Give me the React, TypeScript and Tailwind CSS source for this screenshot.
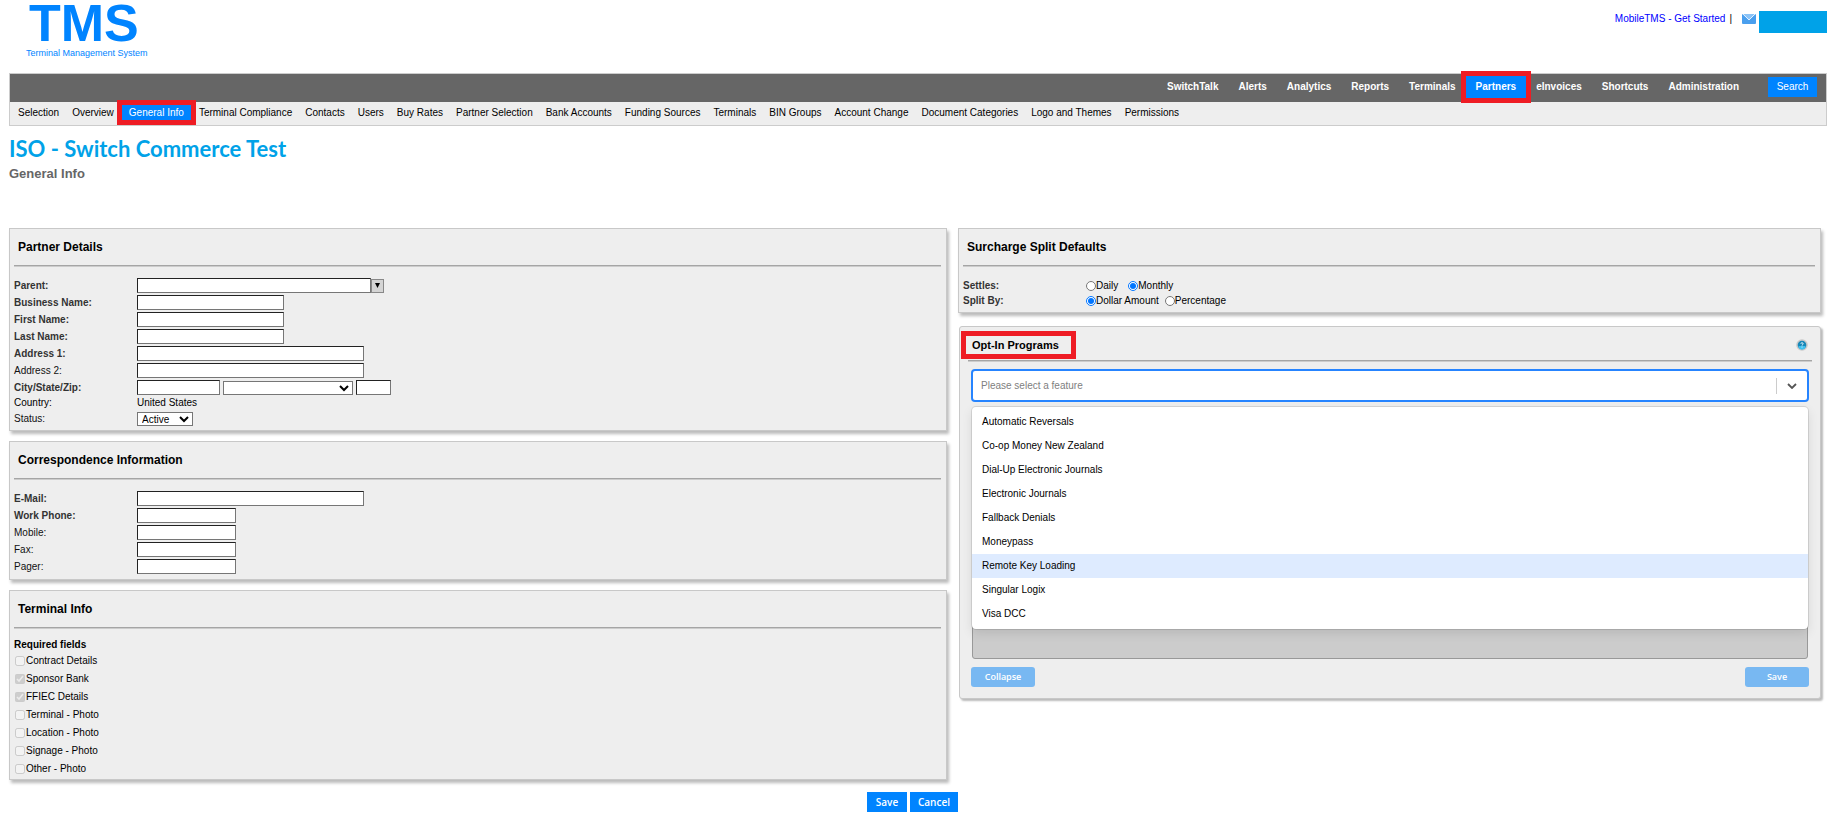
import { useState, type ReactNode } from "react";

const MAIN_NAV = [
  "SwitchTalk",
  "Alerts",
  "Analytics",
  "Reports",
  "Terminals",
  "Partners",
  "eInvoices",
  "Shortcuts",
  "Administration",
];

const SUB_NAV = [
  "Selection",
  "Overview",
  "General Info",
  "Terminal Compliance",
  "Contacts",
  "Users",
  "Buy Rates",
  "Partner Selection",
  "Bank Accounts",
  "Funding Sources",
  "Terminals",
  "BIN Groups",
  "Account Change",
  "Document Categories",
  "Logo and Themes",
  "Permissions",
];

const REQUIRED_FIELDS = [
  { label: "Contract Details", checked: false },
  { label: "Sponsor Bank", checked: true },
  { label: "FFIEC Details", checked: true },
  { label: "Terminal - Photo", checked: false },
  { label: "Location - Photo", checked: false },
  { label: "Signage - Photo", checked: false },
  { label: "Other - Photo", checked: false },
];

const FEATURES = [
  "Automatic Reversals",
  "Co-op Money New Zealand",
  "Dial-Up Electronic Journals",
  "Electronic Journals",
  "Fallback Denials",
  "Moneypass",
  "Remote Key Loading",
  "Singular Logix",
  "Visa DCC",
];

const inputClass =
  "block h-[15px] border border-t-[#222] border-l-[#222] border-r-[#767676] border-b-[#767676] bg-white px-px text-[10px] outline-none";

const Rule = () => <div className="h-[2px] border-t border-[#a5a5a5] bg-[#ccc]" />;

const Panel = ({ title, children }: { title: string; children: ReactNode }) => (
  <section className="border border-[#c8c8c8] bg-[#eee] pr-[5px] pl-1 shadow-[2px_3px_3px_#bbb]">
    <h2 className="flex h-9 items-center px-1 text-[12px] font-bold">{title}</h2>
    <Rule />
    {children}
  </section>
);

const Row = ({
  label,
  id,
  bold,
  children,
}: {
  label: string;
  id?: string;
  bold?: boolean;
  children: ReactNode;
}) => (
  <div className="flex h-[17px] items-center">
    <label
      htmlFor={id}
      className={bold ? "w-[123px] font-bold text-[#333]" : "w-[123px] text-[#111]"}
    >
      {label}
    </label>
    {children}
  </div>
);

const Radio = ({
  name,
  label,
  defaultChecked,
}: {
  name: string;
  label: string;
  defaultChecked?: boolean;
}) => (
  <label className="flex items-center">
    <input type="radio" name={name} defaultChecked={defaultChecked} className="size-[10px]" />
    {label}
  </label>
);

const Header = () => (
  <header className="flex h-[73px] items-start justify-between pl-[17px]">
    <div className="text-[#0084ff]">
      <div className="pl-[3px] text-[52px] leading-[46px] font-bold">TMS</div>
      <div className="text-[9px] leading-[14px]">Terminal Management System</div>
    </div>
    <div className="flex items-start pt-[11px]">
      <div className="flex h-[18px] items-center pb-[2px]">
        <a href="#" className="text-[#0000ff]">
          MobileTMS - Get Started
        </a>
        <span className="mx-1">|</span>
        <svg viewBox="0 0 14 10" className="ml-[6px] h-[10px] w-[14px]">
          <rect width="14" height="10" rx="1" fill="#4a9fee" />
          <path d="M0 0h14L7 6z" fill="#8cc4f7" />
          <path d="M1 0l6 6 6-6" fill="none" stroke="#e3f1ff" strokeWidth="1" />
        </svg>
      </div>
      <div className="ml-[3px] h-[22px] w-[68px] bg-[#00a2e8]" />
    </div>
  </header>
);

const Navigation = () => (
  <div className="border border-[#ccc]">
    <nav className="flex h-7 items-center justify-end bg-[#666] pr-[9px] pb-[2px] font-bold text-white">
      {MAIN_NAV.map((item) => (
        <a
          key={item}
          href="#"
          className={
            item === "Partners"
              ? "flex h-[22px] items-center bg-[#0084ff] px-[10px] outline-5 outline-[#ee1c24]"
              : "px-[10px]"
          }
        >
          {item}
        </a>
      ))}
      <button className="ml-[19px] h-5 w-[49px] bg-[#0084ff] font-normal">Search</button>
    </nav>
    <nav className="flex h-[23px] items-center gap-[3px] bg-[#eee] px-[3px] pb-[2px]">
      {SUB_NAV.map((item) => (
        <a
          key={item}
          href="#"
          className={
            item === "General Info"
              ? "flex h-[15px] items-center bg-[#0084ff] px-[7px] text-white outline-5 outline-[#ee1c24]"
              : "px-[5px]"
          }
        >
          {item}
        </a>
      ))}
    </nav>
  </div>
);

const PartnerDetails = () => (
  <Panel title="Partner Details">
    <div className="pt-[10px] pb-[3px]">
      <Row label="Parent:" id="parent" bold>
        <input id="parent" className={`${inputClass} w-[234px]`} />
        <button
          aria-label="Choose parent"
          className="flex h-[14px] w-[13px] items-center justify-center border border-[#888] bg-[#d4d4d4]"
        >
          <svg viewBox="0 0 6 6" className="size-[5px]">
            <path d="M0 0h6L3 6z" />
          </svg>
        </button>
      </Row>
      <Row label="Business Name:" id="business" bold>
        <input id="business" className={`${inputClass} w-[147px]`} />
      </Row>
      <Row label="First Name:" id="first" bold>
        <input id="first" className={`${inputClass} w-[147px]`} />
      </Row>
      <Row label="Last Name:" id="last" bold>
        <input id="last" className={`${inputClass} w-[147px]`} />
      </Row>
      <Row label="Address 1:" id="address1" bold>
        <input id="address1" className={`${inputClass} w-[227px]`} />
      </Row>
      <Row label="Address 2:" id="address2">
        <input id="address2" className={`${inputClass} w-[227px]`} />
      </Row>
      <Row label="City/State/Zip:" id="city" bold>
        <input id="city" className={`${inputClass} w-[83px]`} />
        <select
          aria-label="State"
          className="mx-[3px] h-[14px] w-[130px] border border-[#767676] bg-white text-[10px]"
        >
          <option></option>
        </select>
        <input aria-label="Zip" className={`${inputClass} w-[35px]`} />
      </Row>
      <div className="flex h-[14px] items-center">
        <span className="w-[123px]">Country:</span>
        <span>United States</span>
      </div>
      <Row label="Status:" id="status">
        <select
          id="status"
          className="h-[14px] w-[56px] border border-[#767676] bg-white text-[10px]"
        >
          <option>Active</option>
        </select>
      </Row>
    </div>
  </Panel>
);

const Correspondence = () => (
  <Panel title="Correspondence Information">
    <div className="pt-[10px] pb-1">
      <Row label="E-Mail:" id="email" bold>
        <input id="email" type="email" className={`${inputClass} w-[227px]`} />
      </Row>
      <Row label="Work Phone:" id="work" bold>
        <input id="work" className={`${inputClass} w-[99px]`} />
      </Row>
      <Row label="Mobile:" id="mobile">
        <input id="mobile" className={`${inputClass} w-[99px]`} />
      </Row>
      <Row label="Fax:" id="fax">
        <input id="fax" className={`${inputClass} w-[99px]`} />
      </Row>
      <Row label="Pager:" id="pager">
        <input id="pager" className={`${inputClass} w-[99px]`} />
      </Row>
    </div>
  </Panel>
);

const TerminalInfo = () => (
  <Panel title="Terminal Info">
    <div className="pt-[9px] pb-px">
      <h3 className="flex h-[14px] items-center font-bold">Required fields</h3>
      {REQUIRED_FIELDS.map((field) => (
        <label key={field.label} className="flex h-[18px] items-center pl-px">
          <input
            type="checkbox"
            disabled
            defaultChecked={field.checked}
            className="mr-px size-[10px]"
          />
          {field.label}
        </label>
      ))}
    </div>
  </Panel>
);

const SurchargeSplit = () => (
  <Panel title="Surcharge Split Defaults">
    <div className="flex flex-col pt-[11px] pb-1">
      <div className="flex h-[15px] items-center">
        <span className="w-[123px] font-bold text-[#333]">Settles:</span>
        <div className="flex gap-[10px]">
          <Radio name="settles" label="Daily" />
          <Radio name="settles" label="Monthly" defaultChecked />
        </div>
      </div>
      <div className="flex h-[15px] items-center">
        <span className="w-[123px] font-bold text-[#333]">Split By:</span>
        <div className="flex gap-[6px]">
          <Radio name="split" label="Dollar Amount" defaultChecked />
          <Radio name="split" label="Percentage" />
        </div>
      </div>
    </div>
  </Panel>
);

const OptInPrograms = () => {
  const [active, setActive] = useState("Remote Key Loading");

  return (
    <section className="ml-px rounded-[3px] border border-[#c8c8c8] bg-[#eee] px-2 pb-[11px] shadow-[2px_2px_2px_#bbb]">
      <div className="flex h-[33px] items-center justify-between pt-[3px] pr-1">
        <h2 className="-ml-[2px] flex h-[18px] w-[105px] items-center pl-[6px] text-[11px] font-bold outline-5 outline-[#ee1c24]">
          Opt-In Programs
        </h2>
        <button aria-label="Help">
          <svg viewBox="0 0 12 12" className="size-3">
            <circle cx="6" cy="6" r="5.8" fill="#c9c9c9" />
            <circle cx="6" cy="6" r="4.3" fill="#1687b8" />
            <path d="M2.5 7a3.5 3.5 0 0 0 7 0z" fill="#3fc0ee" />
            <path
              d="M4.9 4.7c0-1.4 2.3-1.3 2.2 0 0 .9-1.1.9-1.1 1.9M6 7.6v.9"
              fill="none"
              stroke="#fff"
              strokeWidth="0.9"
            />
          </svg>
        </button>
      </div>
      <Rule />
      <div className="px-[3px] pt-[7px]">
        <div className="relative">
          <div className="flex h-[33px] items-center rounded-[4px] border-2 border-[#2684ff] bg-white">
            <input
              aria-label="Feature"
              placeholder="Please select a feature"
              className="min-w-0 flex-1 pl-2 text-[10px] outline-none placeholder:text-[#808080]"
            />
            <span className="h-4 w-px bg-[#ccc]" />
            <button aria-label="Toggle features" className="px-[10px]">
              <svg viewBox="0 0 10 6" className="h-[6px] w-[10px]">
                <path d="M1 1l4 4 4-4" fill="none" stroke="#555" strokeWidth="1.8" />
              </svg>
            </button>
          </div>
          <ul className="absolute inset-x-px top-[38px] rounded-[4px] bg-white py-[3px] shadow-[0_0_0_1px_rgba(0,0,0,0.1),0_4px_11px_rgba(0,0,0,0.1)]">
            {FEATURES.map((feature) => (
              <li
                key={feature}
                onMouseEnter={() => setActive(feature)}
                className={
                  feature === active
                    ? "flex h-6 items-center bg-[#deebff] px-[10px]"
                    : "flex h-6 items-center px-[10px]"
                }
              >
                {feature}
              </li>
            ))}
          </ul>
        </div>
        <div className="mx-px mt-2 h-[249px] rounded-[3px] border border-[#999] bg-[#ccc]" />
        <div className="mt-2 flex justify-between font-['Open_Sans',sans-serif] text-[9px] font-semibold text-white">
          <button className="h-5 w-16 rounded-[3px] bg-[#78b8f2]">Collapse</button>
          <button className="h-5 w-16 rounded-[3px] bg-[#78b8f2]">Save</button>
        </div>
      </div>
    </section>
  );
};

const App = () => (
  <div className="pr-[11px] pl-[9px] font-['Liberation_Sans',Arial,sans-serif] text-[10px] leading-[12px] text-black">
    <Header />
    <Navigation />

    <h1 className="mt-[10px] font-[Lato,sans-serif] text-[22px] leading-[26px] font-bold text-[#00a2e8]">
      ISO - Switch Commerce Test
    </h1>
    <p className="mt-1 text-[13px] leading-4 font-bold text-[#666]">General Info</p>

    <main className="mt-[46px] grid grid-cols-[938fr_863fr] items-start gap-[11px] pr-[6px]">
      <div className="flex flex-col gap-[10px]">
        <PartnerDetails />
        <Correspondence />
        <TerminalInfo />
      </div>
      <div className="flex flex-col gap-[13px]">
        <SurchargeSplit />
        <OptInPrograms />
      </div>
    </main>

    <div className="mt-3 flex justify-center gap-[3px] pr-[11px] font-['Open_Sans',sans-serif] text-[10px] font-semibold text-white">
      <button className="h-5 w-10 bg-[#0084ff]">Save</button>
      <button className="h-5 w-12 bg-[#0084ff]">Cancel</button>
    </div>
  </div>
);

export default App;
